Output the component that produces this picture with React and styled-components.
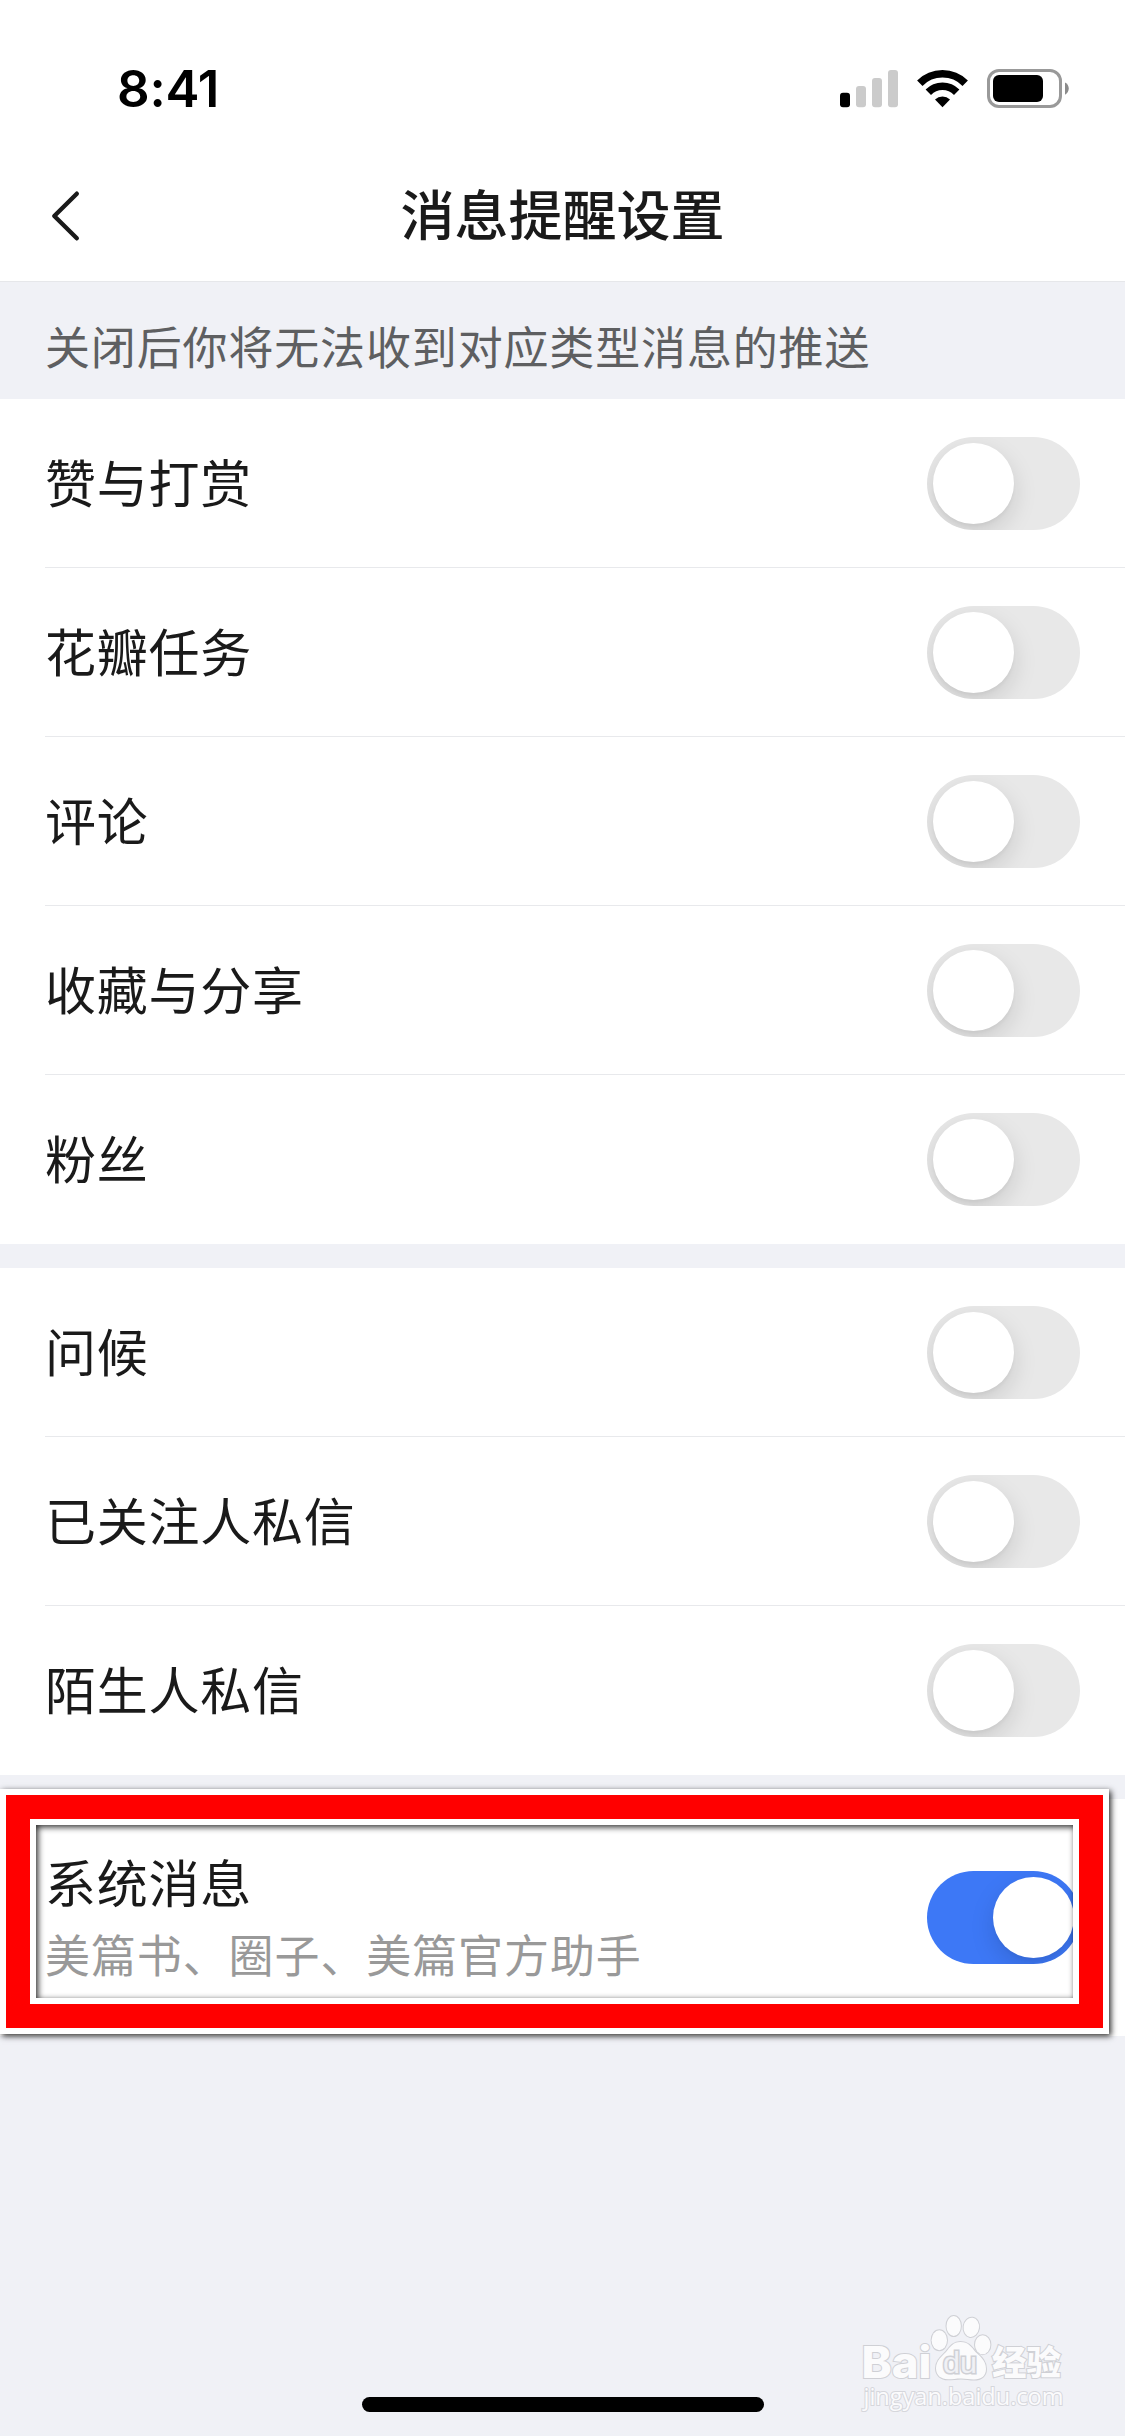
import React, { useState } from "react";
import styled, { createGlobalStyle } from "styled-components";

const GlobalStyle = createGlobalStyle`
  *, *::before, *::after { box-sizing: border-box; }
  html, body { margin: 0; background: #f0f1f6; }
  button { font: inherit; border: 0; padding: 0; background: none; }
`;

const Screen = styled.div`
  position: relative;
  display: flex;
  flex-direction: column;
  width: 1125px;
  height: 2436px;
  overflow: hidden;
  background: #f0f1f6;
  color: #1a1a1a;
  font-family: "Liberation Sans", "Noto Sans CJK SC", sans-serif;
`;

const StatusBar = styled.div`
  display: flex;
  justify-content: space-between;
  align-items: flex-start;
  height: 132px;
  padding: 58px 56px 0 117px;
  background: #fff;
`;

const Clock = styled.div`
  font: 600 51px/62px Inter, "Liberation Sans", sans-serif;
  letter-spacing: -0.2px;
  color: #000;
`;

const StatusIcons = styled.svg`
  width: 230px;
  height: 42px;
  margin-top: 10px;
`;

const NavBar = styled.header`
  display: grid;
  grid-template-columns: 150px 1fr 150px;
  align-items: center;
  height: 150px;
  background: #fff;
  border-bottom: 1px solid #e6e7ea;
`;

const BackButton = styled.button`
  display: flex;
  padding-left: 51px;
  margin-top: 19px;
`;

const Title = styled.h1`
  margin: 13px 0 0;
  text-align: center;
  font-size: 54px;
  line-height: 80px;
  font-weight: 500;
  font-family: "Noto Sans CJK SC", sans-serif;
`;

const Hint = styled.p`
  margin: 0;
  height: 117px;
  padding: 14px 45px 0;
  font-size: 45px;
  line-height: 99px;
  letter-spacing: 0.85px;
  color: #5e5f61;
  font-family: "Noto Sans CJK SC", sans-serif;
`;

const Group = styled.section`
  margin-bottom: 24px;
  background: #fff;
`;

const Row = styled.div`
  display: flex;
  justify-content: space-between;
  align-items: center;
  height: ${(p) => (p.$tall ? 237 : 169)}px;
  margin-left: 45px;
  padding-right: 45px;
  border-bottom: 1px solid #e8e9ec;

  &:last-child { border-bottom-color: transparent; }
`;

const RowText = styled.div`
  display: flex;
  flex-direction: column;
  padding-bottom: ${(p) => (p.$tall ? 0 : 4)}px;
`;

const Label = styled.span`
  font-size: 51px;
  line-height: 72px;
  letter-spacing: 0.75px;
  font-family: "Noto Sans CJK SC", sans-serif;
`;

const Detail = styled.span`
  padding-top: 1px;
  font-size: 45px;
  line-height: 72px;
  letter-spacing: 0.9px;
  color: #999;
  font-family: "Noto Sans CJK SC", sans-serif;
`;

const Switch = styled.button`
  display: flex;
  justify-content: ${(p) => (p.$on ? "flex-end" : "flex-start")};
  align-items: center;
  width: 153px;
  height: 93px;
  padding: 0 6px;
  border-radius: 47px;
  overflow: hidden;
  background: ${(p) => (p.$on ? "#3d78f6" : "#e8e8e8")};
`;

const Knob = styled.span`
  width: 81px;
  height: 81px;
  border-radius: 50%;
  background: #fff;
  box-shadow: 0 9px 24px rgba(0, 0, 0, 0.13), 0 3px 3px rgba(0, 0, 0, 0.03);
`;

const Highlight = styled.div`
  position: absolute;
  left: 0;
  top: 1789px;
  width: 1109px;
  height: 245px;
  border: 6px solid #fff;
  box-shadow: 2px 2px 6px rgba(0, 0, 0, 0.85);
  pointer-events: none;
`;

const HighlightBand = styled.div`
  height: 100%;
  border: 24px solid #f00;
`;

const HighlightInner = styled.div`
  height: 100%;
  border: 6px solid #fff;
  box-shadow: inset 2px 2px 6px rgba(0, 0, 0, 0.85);
`;

const HomeIndicator = styled.div`
  position: absolute;
  left: 362px;
  top: 2397px;
  width: 402px;
  height: 15px;
  border-radius: 8px;
  background: #000;
`;

const Watermark = styled.svg`
  position: absolute;
  left: 855px;
  top: 2310px;
  width: 230px;
  height: 120px;
  overflow: visible;
`;

const groups = [
  [["赞与打赏"], ["花瓣任务"], ["评论"], ["收藏与分享"], ["粉丝"]],
  [["问候"], ["已关注人私信"], ["陌生人私信"]],
  [["系统消息", "美篇书、圈子、美篇官方助手"]],
];

function SettingRow({ label, detail }) {
  const [on, setOn] = useState(Boolean(detail));
  return (
    <Row $tall={Boolean(detail)}>
      <RowText $tall={Boolean(detail)}>
        <Label>{label}</Label>
        {detail && <Detail>{detail}</Detail>}
      </RowText>
      <Switch $on={on} role="switch" aria-checked={on} onClick={() => setOn(!on)}>
        <Knob />
      </Switch>
    </Row>
  );
}

function BaiduMark() {
  return (
    <Watermark viewBox="0 0 230 120">
      <g fill="#fbfbfc" stroke="#cfd0d5" strokeWidth="2" paintOrder="stroke">
        <text x="6.500" y="67.700" fontFamily="Inter, Liberation Sans, sans-serif" fontWeight="800" fontSize="44" textLength="70" lengthAdjust="spacingAndGlyphs">Bai</text>
        <text x="137" y="64.500" fontFamily="Noto Sans CJK SC, sans-serif" fontWeight="900" fontSize="34" textLength="69" lengthAdjust="spacingAndGlyphs">经验</text>
        <text x="8.500" y="95" fontFamily="Open Sans, Noto Sans, sans-serif" fontSize="23.500" textLength="200" lengthAdjust="spacingAndGlyphs" stroke="#d6d7dc">jingyan.baidu.com</text>
        <ellipse cx="84.300" cy="30.300" rx="7.700" ry="10" />
        <ellipse cx="98.700" cy="16" rx="7.200" ry="10" />
        <ellipse cx="116.300" cy="17.300" rx="7.700" ry="9.700" transform="rotate(8 116.300 17.300)" />
        <ellipse cx="127.700" cy="34.700" rx="7.700" ry="9.500" />
        <path d="M105.500 32c8 0 11 5 15 10 4 4 10.500 8 10.500 17 0 7-5 10.500-12 10.500-5 0-8-1-13-1-5 0-8 .8-13 .8-7 0-12-4-12-11 0-8 6-12 10-16.300 4-5 7-10 14.500-10z" />
        <text x="88" y="63.300" fill="#f0f1f5" fontFamily="Liberation Sans, sans-serif" fontSize="29" textLength="34" lengthAdjust="spacingAndGlyphs" stroke="#cfd0d5" strokeWidth="3">du</text>
      </g>
    </Watermark>
  );
}

export default function App() {
  return (
    <>
      <GlobalStyle />
      <Screen>
        <StatusBar>
          <Clock>8:41</Clock>
          <StatusIcons viewBox="839 68 230 42">
            <g fill="#cbcbcb">
              <rect x="840" y="92.700" width="10" height="14.500" rx="3" fill="#000" />
              <rect x="856" y="86" width="10" height="21.200" rx="3" />
              <rect x="872" y="78" width="10" height="29.200" rx="3" />
              <rect x="888" y="70" width="10" height="37.200" rx="3" />
            </g>
            <g fill="none" stroke="#000" strokeWidth="7.600">
              <path d="M919.800 83.200a32 32 0 0 1 45.400 0" />
              <path d="M928.300 92.200a20 20 0 0 1 28.400 0" />
            </g>
            <path d="M942.500 107.200l-7.500-7.800a11 11 0 0 1 15 0z" fill="#000" />
            <rect x="988.500" y="70.500" width="72" height="36" rx="10.500" fill="none" stroke="#999" strokeWidth="3" />
            <rect x="993" y="75" width="50" height="27" rx="6" fill="#000" />
            <path d="M1065 82.500c5 2.200 5 10 0 12.200z" fill="#8b8b8b" />
          </StatusIcons>
        </StatusBar>
        <NavBar>
          <BackButton aria-label="返回">
            <svg width="32" height="52" viewBox="0 0 32 52" fill="none" stroke="#1a1a1a" strokeWidth="4.400" strokeLinecap="round" strokeLinejoin="round">
              <path d="M25.800 3.700L3.300 26l22.500 22.300" />
            </svg>
          </BackButton>
          <Title>消息提醒设置</Title>
        </NavBar>
        <Hint>关闭后你将无法收到对应类型消息的推送</Hint>
        {groups.map((rows, i) => (
          <Group key={i}>
            {rows.map(([label, detail]) => (
              <SettingRow key={label} label={label} detail={detail} />
            ))}
          </Group>
        ))}
        <Highlight>
          <HighlightBand>
            <HighlightInner />
          </HighlightBand>
        </Highlight>
        <BaiduMark />
        <HomeIndicator />
      </Screen>
    </>
  );
}
